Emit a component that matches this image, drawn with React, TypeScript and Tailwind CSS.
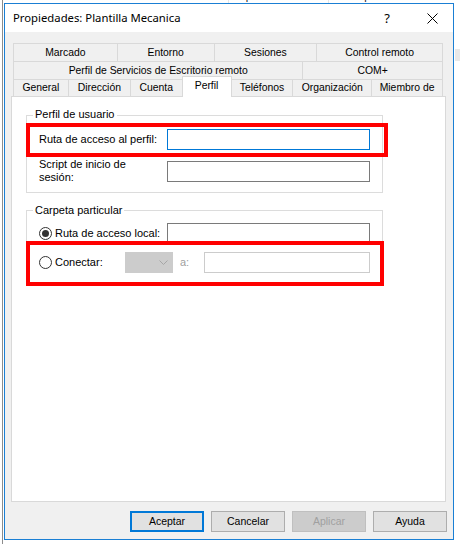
import React from "react";

type Tab = { label: string; w: string };

const row1: Tab[] = [
  { label: "Marcado", w: "w-[104px]" },
  { label: "Entorno", w: "w-[97px]" },
  { label: "Sesiones", w: "w-[103px]" },
  { label: "Control remoto", w: "w-[126px]" },
];

const row2: Tab[] = [
  { label: "Perfil de Servicios de Escritorio remoto", w: "w-[290px]" },
  { label: "COM+", w: "w-[140px]" },
];

const TabRow = ({ tabs }: { tabs: Tab[] }) => (
  <div className="flex h-[18px] w-[430px] border-r border-[#d9d9d9]">
    {tabs.map((t) => (
      <div
        key={t.label}
        className={`${t.w} flex items-center justify-center border-t border-l border-[#d9d9d9] bg-[#f0f0f0] leading-[13px]`}
      >
        {t.label}
      </div>
    ))}
  </div>
);

const Radio = ({ checked }: { checked?: boolean }) => (
  <span className="flex h-[13px] w-[13px] shrink-0 items-center justify-center rounded-full border border-[#333333] bg-white">
    {checked && <span className="h-[7px] w-[7px] rounded-full bg-[#333333]" />}
  </span>
);

const Propiedades = () => {
  return (
    <div className="relative h-[544px] w-[460px] overflow-hidden bg-white font-['Liberation_Sans',Arial,sans-serif] text-[11px] text-black">
      {/* list view behind the dialog */}
      <div className="absolute left-[2px] top-0 h-[544px] w-px bg-[#8c8c8c]" />
      <div className="absolute left-[13px] top-[-10px] leading-[13px] text-[#1e1e1e]">Nombre</div>
      <div className="absolute left-[228px] top-0 h-[3px] w-px bg-[#e5e5e5]" />
      <div className="absolute left-[237px] top-[-10px] leading-[13px] text-[#1e1e1e]">Tipo</div>
      <div className="absolute left-[328px] top-0 h-[3px] w-px bg-[#e5e5e5]" />
      <div className="absolute left-[333px] top-[-10px] leading-[13px] text-[#1e1e1e]">Descripción</div>
      <div className="absolute left-[455px] top-[49px] h-[12px] w-[5px] bg-[#e8e8e8]" />

      {/* dialog window */}
      <div className="absolute left-[4px] top-[3px] flex h-[537px] w-[450px] flex-col border border-[#1a7fd4] bg-[#f0f0f0]">
        {/* title bar */}
        <div className="flex h-[28px] items-center bg-white pl-[8px]">
          <span className="font-['Noto_Sans',sans-serif] text-[11.3px] leading-[16px] text-black">
            Propiedades: Plantilla Mecanica
          </span>
          <div className="ml-auto flex items-center">
            <span className="w-[12px] text-center font-['Noto_Sans',sans-serif] text-[13px] leading-[16px]">?</span>
            <svg className="ml-[34px] mr-[15px]" width="11" height="11" viewBox="0 0 11 11">
              <path d="M0.5 0.5 L10.5 10.5 M10.5 0.5 L0.5 10.5" stroke="#000" strokeWidth="1" fill="none" />
            </svg>
          </div>
        </div>

        {/* tabs */}
        <div className="ml-[8px] mt-[11px] flex flex-col text-[10.4px]">
          <TabRow tabs={row1} />
          <TabRow tabs={row2} />
          <div className="flex h-[17px] w-[430px] items-end border-r border-[#d9d9d9]">
            <div className="flex h-[17px] w-[55px] items-center justify-center border-t border-l border-[#d9d9d9]">General</div>
            <div className="flex h-[17px] w-[62px] items-center justify-center border-t border-l border-[#d9d9d9]">Dirección</div>
            <div className="flex h-[17px] w-[52px] items-center justify-center border-t border-l border-[#d9d9d9]">Cuenta</div>
            <div className="relative z-10 mb-[-1px] flex h-[21px] w-[50px] justify-center border-x border-t border-[#d9d9d9] bg-white pt-[2px] leading-[13px]">
              Perfil
            </div>
            <div className="flex h-[17px] w-[61px] items-center justify-center border-t border-[#d9d9d9]">Teléfonos</div>
            <div className="flex h-[17px] w-[79px] items-center justify-center border-t border-l border-[#d9d9d9]">Organización</div>
            <div className="flex h-[17px] w-[71px] items-center justify-center border-t border-l border-[#d9d9d9]">Miembro de</div>
          </div>
        </div>

        {/* tab page */}
        <div className="relative ml-[6px] h-[406px] w-[435px] border border-[#d9d9d9] bg-white">
          {/* Perfil de usuario */}
          <div className="relative ml-[14px] mt-[18px] flex h-[78px] w-[357px] flex-col gap-[8px] border border-[#dcdcdc] px-[12px] pt-[13px]">
            <span className="absolute left-[6px] top-[-8px] bg-white px-[2px] leading-[13px]">Perfil de usuario</span>
            <div className="flex items-center">
              <span className="w-[128px] leading-[13px]">Ruta de acceso al perfil:</span>
              <div className="h-[21px] w-[203px] border border-[#0078d7] bg-white" />
            </div>
            <div className="flex items-center">
              <span className="w-[128px] leading-[13px]">
                Script de inicio de
                <br />
                sesión:
              </span>
              <div className="h-[21px] w-[203px] border border-[#7a7a7a] bg-white" />
            </div>
          </div>

          {/* Carpeta particular */}
          <div className="relative ml-[14px] mt-[17px] flex h-[74px] w-[357px] flex-col gap-[8px] border border-[#dcdcdc] px-[12px] pt-[12px]">
            <span className="absolute left-[6px] top-[-7px] bg-white px-[2px] leading-[13px]">Carpeta particular</span>
            <div className="flex items-center">
              <div className="flex w-[128px] items-center gap-[3px]">
                <Radio checked />
                <span className="leading-[13px]">Ruta de acceso local:</span>
              </div>
              <div className="h-[21px] w-[203px] border border-[#7a7a7a] bg-white" />
            </div>
            <div className="flex items-center">
              <div className="flex w-[86px] items-center gap-[3px]">
                <Radio />
                <span className="leading-[13px]">Conectar:</span>
              </div>
              <div className="flex h-[21px] w-[48px] items-center justify-end bg-[#cccccc] pr-[5px]">
                <svg width="9" height="6" viewBox="0 0 9 6">
                  <path d="M0.5 0.5 L4.5 4.5 L8.5 0.5" stroke="#a6a6a6" strokeWidth="1" fill="none" />
                </svg>
              </div>
              <span className="ml-[7px] w-[24px] leading-[13px] text-[#a0a0a0]">a:</span>
              <div className="h-[21px] w-[166px] border border-[#cccccc] bg-white" />
            </div>
          </div>

          {/* highlight frames */}
          <div className="pointer-events-none absolute left-[14px] top-[26px] h-[34px] w-[362px] border-4 border-[#ff0000]" />
          <div className="pointer-events-none absolute left-[14px] top-[144px] h-[45px] w-[358px] border-4 border-[#ff0000]" />
        </div>

        {/* buttons */}
        <div className="mt-[9px] flex justify-end gap-[7px] pr-[6px] text-[10.5px]">
          <button className="h-[21px] w-[74px] border-2 border-[#0078d7] bg-[#e1e1e1] leading-[13px]">Aceptar</button>
          <button className="h-[21px] w-[74px] border border-[#adadad] bg-[#e1e1e1] leading-[13px]">Cancelar</button>
          <button className="h-[21px] w-[74px] border border-[#bfbfbf] bg-[#cccccc] leading-[13px] text-[#a0a0a0]">Aplicar</button>
          <button className="h-[21px] w-[74px] border border-[#adadad] bg-[#e1e1e1] leading-[13px]">Ayuda</button>
        </div>
      </div>
    </div>
  );
};

export default function App() {
  return <Propiedades />;
}
